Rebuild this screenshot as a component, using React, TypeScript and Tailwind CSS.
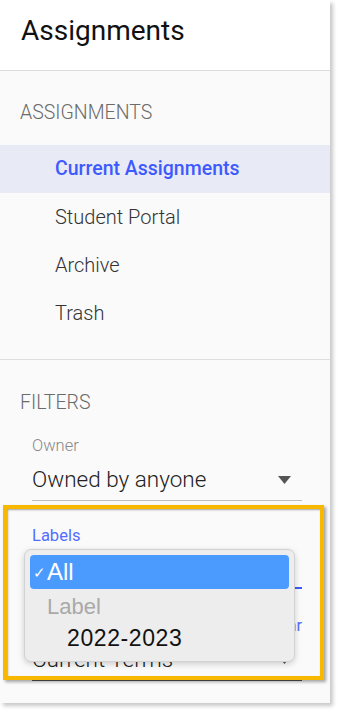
import React from "react";

const navItems = ["Current Assignments", "Student Portal", "Archive", "Trash"];

function Caret() {
  return (
    <svg width="13" height="8" viewBox="0 0 13 8" className="shrink-0">
      <path d="M0 0h13L6.5 8z" fill="#555" />
    </svg>
  );
}

export default function App() {
  return (
    <div className="relative w-[340px] h-[713px] bg-white font-['Roboto',sans-serif] overflow-hidden">
      <div className="w-[330px] h-[703px] bg-[#fafafa] shadow-[3px_3px_4px_rgba(0,0,0,0.22)] flex flex-col">
        <header className="h-[71px] shrink-0 bg-white border-b border-[#dcdcdc] flex items-center pl-[21px] pb-[8px]">
          <h1 className="text-[28px] text-[#111] leading-none">Assignments</h1>
        </header>

        <div className="pt-[32px] pl-[20px] text-[19.5px] text-[#6b6b6b] leading-[20px] font-light">
          ASSIGNMENTS
        </div>

        <nav className="mt-[22px] flex flex-col">
          {navItems.map((item, i) => (
            <div
              key={item}
              className={
                i === 0
                  ? "h-12 flex items-center pl-[55px] bg-[#e8eaf6] text-[#3d5afe] font-medium text-[19.5px]"
                  : "h-12 flex items-center pl-[55px] text-[#333] font-light text-[20px]"
              }
            >
              {item}
            </div>
          ))}
        </nav>

        <div className="mt-[22px] border-t border-[#dedede]" />

        <div className="pt-[33px] pl-[20px] text-[19.5px] text-[#6b6b6b] leading-[20px] font-light">
          FILTERS
        </div>

        <div className="mt-[24px] pl-[32px] pr-[28px]">
          <div className="text-[16.5px] text-[#888] font-light leading-[18px]">Owner</div>
          <div className="mt-[4px] h-[42px] flex items-center justify-between border-b border-[#bdbdbd]">
            <span className="text-[22.5px] text-[#222] font-light">Owned by anyone</span>
            <span className="pr-[11px]">
              <Caret />
            </span>
          </div>

          <div className="mt-[26px] text-[16.5px] text-[#536dfe] leading-[18px]">Labels</div>
          <div className="mt-[2px] h-[42px] flex items-center justify-between border-b-2 border-[#3d5afe]">
            <span className="text-[22.5px] text-[#222] font-light">All</span>
            <span className="pr-[11px]">
              <Caret />
            </span>
          </div>

          <div className="mt-[28px] flex justify-between text-[16.5px] leading-[18px]">
            <span className="text-[#888] font-light">Terms</span>
            <span className="text-[#536dfe]">Change Year</span>
          </div>
          <div className="mt-[4px] h-[42px] flex items-center justify-between border-b border-[#555]">
            <span className="text-[22.5px] text-[#222] font-light">Current Terms</span>
            <span className="pr-[11px]">
              <Caret />
            </span>
          </div>
        </div>
      </div>

      {/* highlight annotation */}
      <div className="absolute left-[3px] top-[505px] w-[321px] h-[175px] border-[4px] border-[#f8b700] shadow-[inset_1px_1px_2px_rgba(0,0,0,0.35),2px_2px_3px_rgba(0,0,0,0.35)]" />

      {/* native select menu */}
      <div className="absolute left-[24px] top-[549px] w-[271px] h-[113px] rounded-[7px] bg-[#ededed] border border-[#d2d2d2] shadow-[0_2px_6px_rgba(0,0,0,0.18)] p-[5px] font-['Liberation_Sans',sans-serif]">
        <div className="h-[34px] rounded-[4px] bg-[#4b9bff] flex items-center pl-[3px] text-white">
          <span className="text-[15px] w-[14px] leading-none">✓</span>
          <span className="text-[24px] font-medium">All</span>
        </div>
        <div className="h-[34px] flex items-center pl-[17px] text-[22px] text-[#a9a9a9]">Label</div>
        <div className="h-[30px] flex items-center pl-[37px] text-[23px] tracking-[0.6px] text-[#111]">2022-2023</div>
      </div>
    </div>
  );
}
